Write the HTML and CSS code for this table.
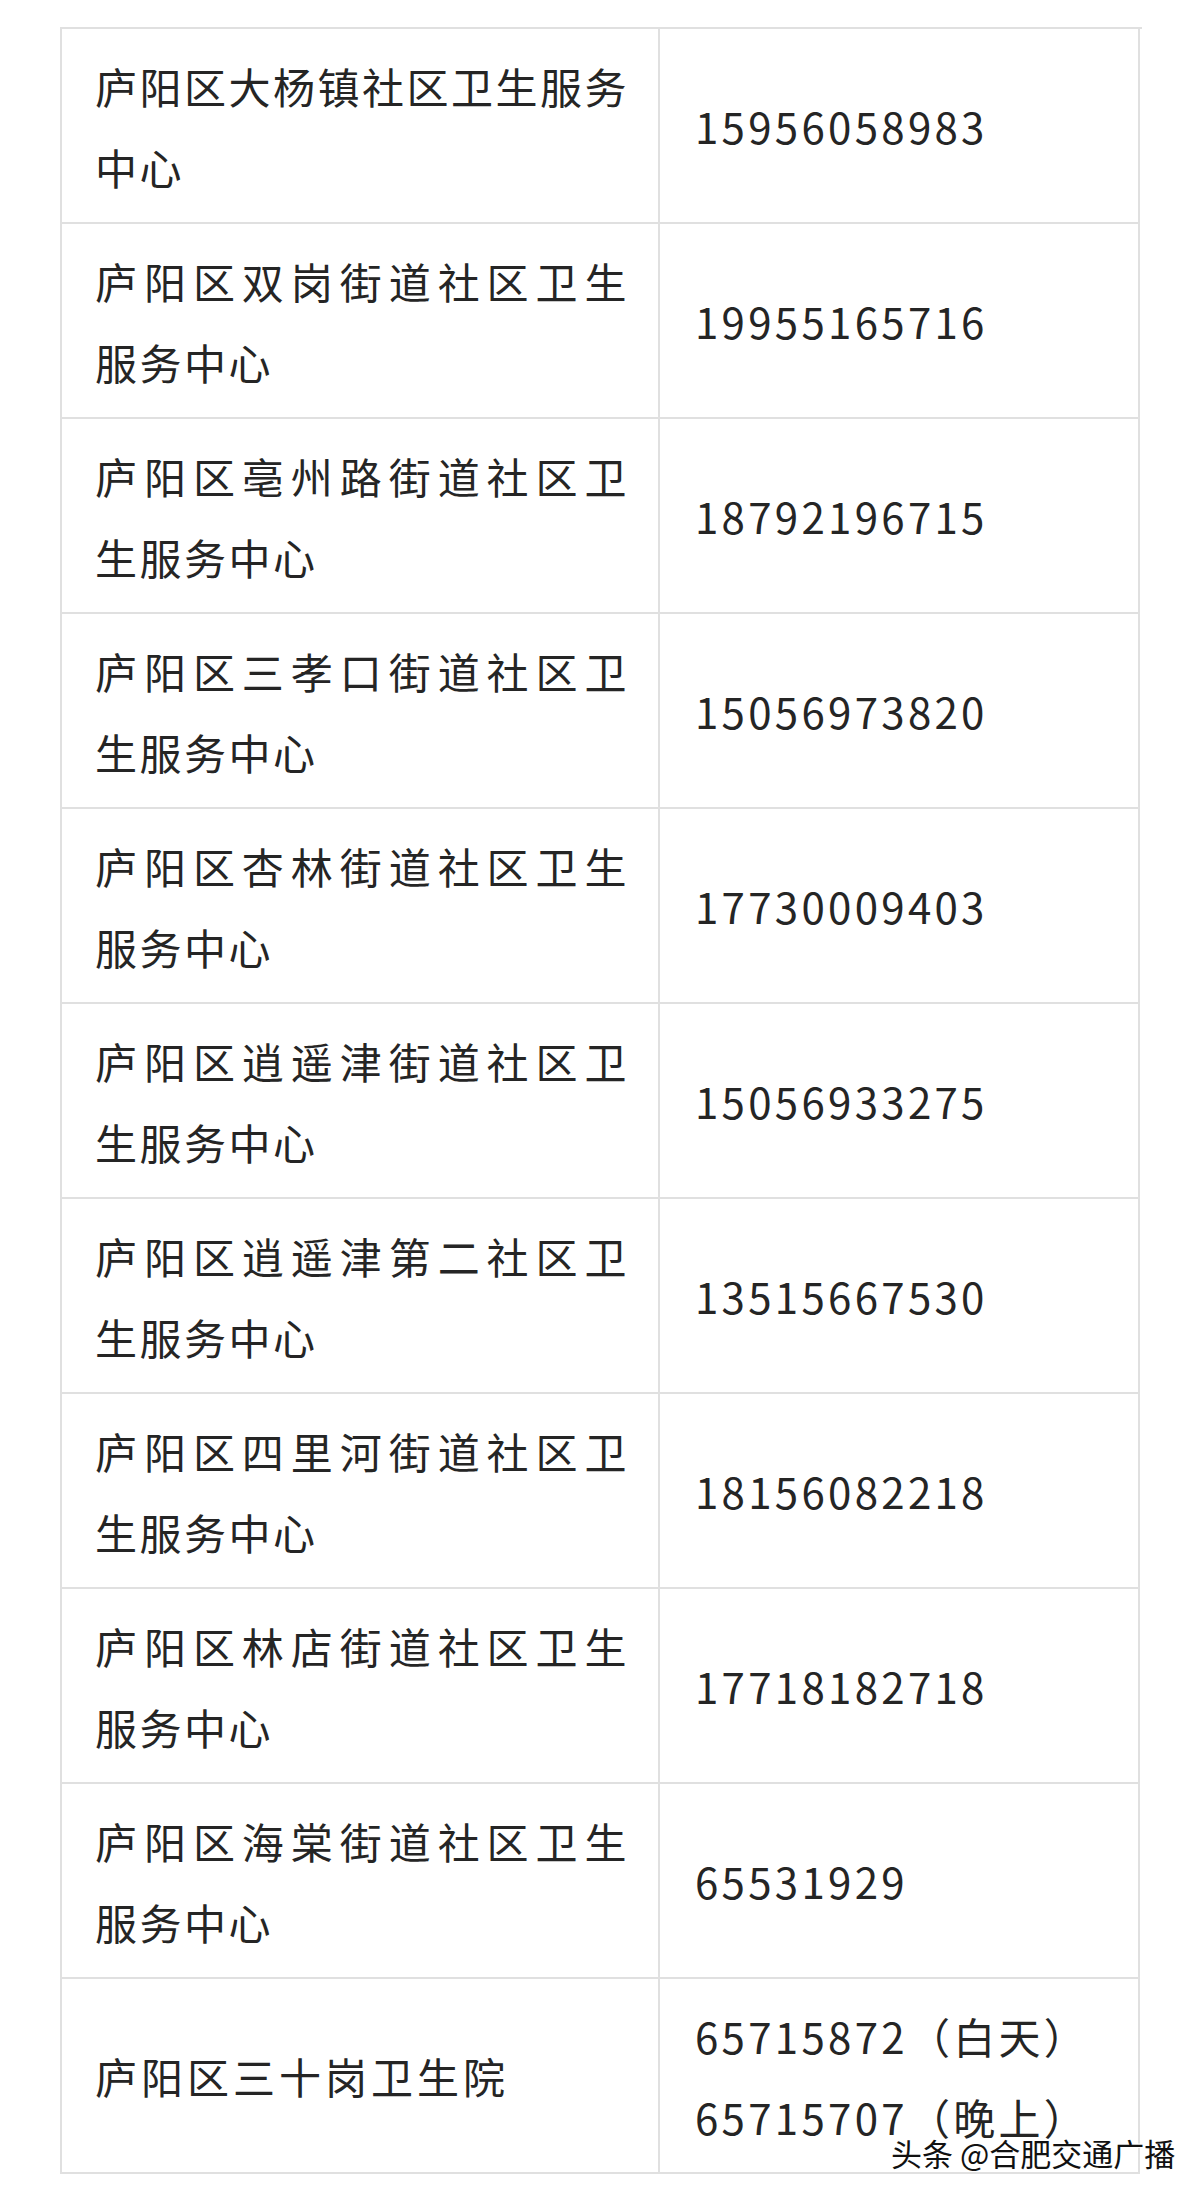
FILE: index.html
```html
<!DOCTYPE html>
<html lang="zh-CN">
<head>
<meta charset="utf-8">
<title>庐阳区社区卫生服务中心联系电话</title>
<link rel="stylesheet" href="styles.css">
</head>
<body>
<div class="page">
  <div class="table">
    <div class="cell name"><p><span class="fill">庐阳区大杨镇社区卫生服务</span><span>中心</span></p></div>
    <div class="cell phone">15956058983</div>
    <div class="cell name"><p><span class="fill">庐阳区双岗街道社区卫生</span><span>服务中心</span></p></div>
    <div class="cell phone">19955165716</div>
    <div class="cell name"><p><span class="fill">庐阳区亳州路街道社区卫</span><span>生服务中心</span></p></div>
    <div class="cell phone">18792196715</div>
    <div class="cell name"><p><span class="fill">庐阳区三孝口街道社区卫</span><span>生服务中心</span></p></div>
    <div class="cell phone">15056973820</div>
    <div class="cell name"><p><span class="fill">庐阳区杏林街道社区卫生</span><span>服务中心</span></p></div>
    <div class="cell phone">17730009403</div>
    <div class="cell name"><p><span class="fill">庐阳区逍遥津街道社区卫</span><span>生服务中心</span></p></div>
    <div class="cell phone">15056933275</div>
    <div class="cell name"><p><span class="fill">庐阳区逍遥津第二社区卫</span><span>生服务中心</span></p></div>
    <div class="cell phone">13515667530</div>
    <div class="cell name"><p><span class="fill">庐阳区四里河街道社区卫</span><span>生服务中心</span></p></div>
    <div class="cell phone">18156082218</div>
    <div class="cell name"><p><span class="fill">庐阳区林店街道社区卫生</span><span>服务中心</span></p></div>
    <div class="cell phone">17718182718</div>
    <div class="cell name"><p><span class="fill">庐阳区海棠街道社区卫生</span><span>服务中心</span></p></div>
    <div class="cell phone">65531929</div>
    <div class="cell name"><p><span class="single">庐阳区三十岗卫生院</span></p></div>
    <div class="cell phone">65715872（白天）<br>65715707（晚上）</div>
  </div>
  <div class="watermark">头条 @合肥交通广播</div>
</div>
</body>
</html>
```
FILE: styles.css
```css
html, body {
  margin: 0;
  padding: 0;
  background: #ffffff;
}

.page {
  position: relative;
  width: 1200px;
  height: 2194px;
  padding-top: 27px;
  box-sizing: border-box;
  font-family: "Noto Sans CJK SC", "Noto Sans", sans-serif;
  color: #252525;
}

.table {
  margin-left: 60px;
  width: 1080px;
  display: grid;
  grid-template-columns: 598px 480px;
  border-top: 2px solid #e0e0e0;
  border-left: 2px solid #e0e0e0;
}

.cell {
  box-sizing: border-box;
  height: 195px;
  border-right: 2px solid #e0e0e0;
  border-bottom: 2px solid #e0e0e0;
  display: flex;
  align-items: center;
  font-size: 42px;
  line-height: 81px;
}

.name {
  padding: 0 29px 0 33px;
  letter-spacing: 2.5px;
}

.name p {
  margin: 0;
  width: 100%;
}

.name span {
  display: block;
  white-space: nowrap;
}

.name .fill {
  text-align: justify;
  text-align-last: justify;
}

.name .single {
  letter-spacing: 4px;
}

.phone {
  padding: 0 20px 0 35px;
  letter-spacing: 3.3px;
}

.watermark {
  position: absolute;
  left: 891px;
  top: 2134px;
  font-size: 31px;
  line-height: 38px;
  color: #111111;
  white-space: nowrap;
  text-shadow: 1px 1px 0 #fff, -1px -1px 0 #fff, 1px -1px 0 #fff, -1px 1px 0 #fff;
}
```
